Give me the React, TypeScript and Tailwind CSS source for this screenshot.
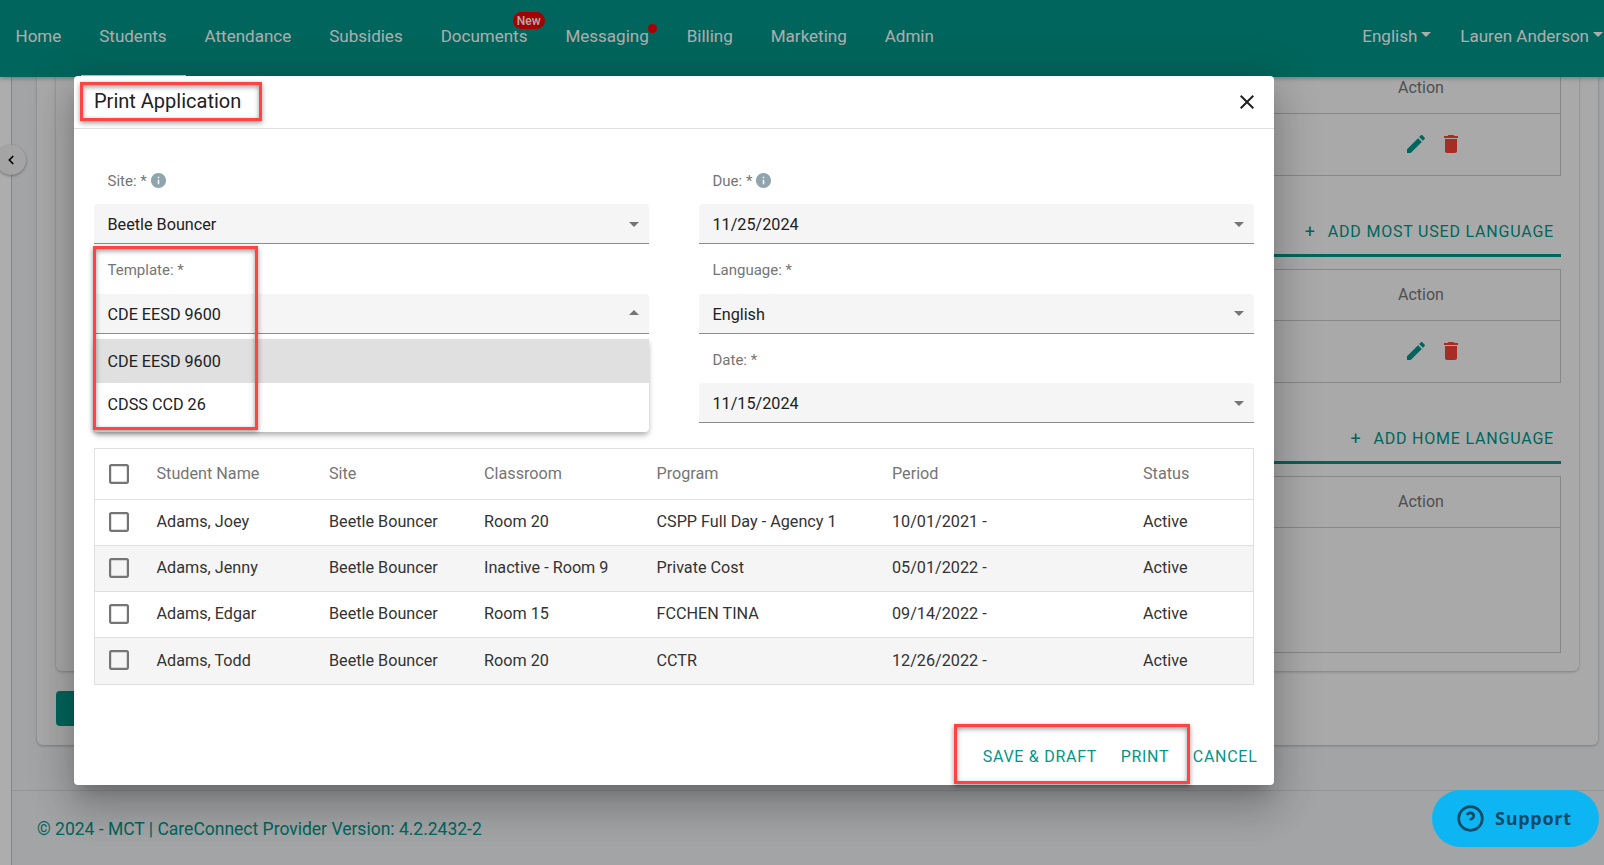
import { ChevronLeft } from "lucide-react";

const navItems = ["Home", "Students", "Attendance", "Subsidies", "Documents", "Messaging", "Billing", "Marketing", "Admin"];

const students = [
  { name: "Adams, Joey", room: "Room 20", program: "CSPP Full Day - Agency 1", period: "10/01/2021 -" },
  { name: "Adams, Jenny", room: "Inactive - Room 9", program: "Private Cost", period: "05/01/2022 -" },
  { name: "Adams, Edgar", room: "Room 15", program: "FCCHEN TINA", period: "09/14/2022 -" },
  { name: "Adams, Todd", room: "Room 20", program: "CCTR", period: "12/26/2022 -" },
];

const tableCols = "grid grid-cols-[61.5px_172.5px_155px_172.5px_235.5px_251px_1fr] items-center";

function Caret() {
  return <span className="ml-[4px] mt-[-3px] h-0 w-0 border-x-[5px] border-t-[5px] border-x-transparent border-t-white" />;
}

function Info() {
  return (
    <svg viewBox="2 2 20 20" className="mb-[1px] ml-[4px] h-[15px] w-[15px] fill-[#90a4ae]">
      <path d="M12 2C6.48 2 2 6.48 2 12s4.48 10 10 10 10-4.48 10-10S17.52 2 12 2zm1 15h-2v-6h2v6zm0-8h-2V7h2v2z" />
    </svg>
  );
}

function Checkbox() {
  return (
    <svg viewBox="3 3 18 18" className="ml-[14px] h-[20px] w-[20px] fill-[#757575]">
      <path d="M19 5v14H5V5h14m0-2H5c-1.1 0-2 .9-2 2v14c0 1.1.9 2 2 2h14c1.1 0 2-.9 2-2V5c0-1.1-.9-2-2-2z" />
    </svg>
  );
}

function Field({ label, value, info, open }: { label: string; value: string; info?: boolean; open?: boolean }) {
  return (
    <div className="relative">
      <div className="flex h-[46px] items-center pl-[13.5px] text-[15px] text-[#757575]">
        {label}
        {info && <Info />}
      </div>
      <div className="flex h-[40px] items-center justify-between rounded-t-[4px] border-b border-[#8c8c8c] bg-[#f5f5f5] pl-[13.5px] pr-[3px] text-[16.2px] text-[#212121]">
        <span className="pt-[4px]">{value}</span>
        <svg viewBox="0 0 24 24" className="h-[24px] w-[24px] fill-[#757575]">
          <path d={open ? "M7 14l5-5 5 5z" : "M7 10l5 5 5-5z"} />
        </svg>
      </div>
      {open && (
        <div className="absolute left-0 right-0 top-[91px] z-10 h-[93px] rounded-b-[4px] bg-white text-[16.2px] text-[#212121] shadow-[0_4px_6px_-1px_rgba(0,0,0,0.25),0_2px_4px_rgba(0,0,0,0.1)]">
          <div className="flex h-[44px] items-center bg-[#e0e0e0] pl-[13.5px] pt-[3px]">CDE EESD 9600</div>
          <div className="flex h-[42px] items-center pl-[13.5px] pt-[3px]">CDSS CCD 26</div>
        </div>
      )}
    </div>
  );
}

function ActionBox({ rows, tall }: { rows?: boolean; tall?: boolean }) {
  return (
    <div className={`ml-[20px] flex flex-col items-end border border-[#c8c8c8] ${tall ? "h-[177px]" : "h-[114px]"}`}>
      <div className="flex h-[51px] w-full shrink-0 justify-end border-b border-[#c8c8c8]">
        <span className="flex w-[278px] items-center justify-center text-[16px] text-[#757575]">Action</span>
      </div>
      {rows && (
        <div className="flex w-[278px] flex-1 items-center justify-center gap-[11px] pb-[2px] pl-[24px]">
          <svg viewBox="0 0 24 24" className="h-[24px] w-[24px] fill-[#009688]">
            <path d="M3 17.25V21h3.75L17.81 9.94l-3.75-3.75L3 17.25zM20.71 7.04c.39-.39.39-1.02 0-1.41l-2.34-2.34c-.39-.39-1.02-.39-1.41 0l-1.83 1.83 3.75 3.75 1.83-1.83z" />
          </svg>
          <svg viewBox="0 0 24 24" className="h-[24px] w-[24px] fill-[#f44336]">
            <path d="M6 19c0 1.1.9 2 2 2h8c1.1 0 2-.9 2-2V7H6v12zM19 4h-3.5l-1-1h-5l-1 1H5v2h14V4z" />
          </svg>
        </div>
      )}
    </div>
  );
}

function AddRow({ label }: { label: string }) {
  return (
    <div className="ml-[20px] mb-[12px] flex h-[81px] items-start justify-end border-b-[3px] border-[#009688] pr-[7px] pt-[43px] text-[16px] leading-[26px] tracking-[0.05em] text-[#009688]">
      <span className="mr-[12px] text-[18px]">+</span>
      {label}
    </div>
  );
}

export default function App() {
  return (
    <div className="relative flex h-[865px] w-full flex-col overflow-hidden bg-[#f0f2f5] font-[Roboto,sans-serif]">
      <nav className="relative z-10 flex h-[77px] shrink-0 items-start justify-between bg-[#009688] pl-[15.5px] pt-[24px] text-[17px] leading-[24px] text-white shadow-[0_2px_4px_rgba(0,0,0,0.25)]">
        <div className="flex gap-[38px]">
          {navItems.map((item) => (
            <span key={item} className="relative">
              {item}
              {item === "Documents" && (
                <span className="absolute left-[72px] top-[-12px] flex h-[17px] w-[32px] items-center justify-center rounded-full bg-[#f70000] text-[12px] font-medium">
                  New
                </span>
              )}
              {item === "Messaging" && (
                <span className="absolute left-[83px] top-[0px] h-[9px] w-[9px] rounded-full bg-[#f70000]" />
              )}
            </span>
          ))}
        </div>
        <div className="flex items-center pr-[1px]">
          <span>English</span>
          <Caret />
          <span className="ml-[29px]">Lauren Anderson</span>
          <Caret />
        </div>
      </nav>

      <div className="flex min-h-0 flex-1">
        <div className="w-[12px] shrink-0 border-r border-[#c4c4c4] bg-white" />
        <div className="flex min-w-0 flex-1 flex-col">
          <main className="h-[713px] shrink-0 pl-[25px] pr-[6px]">
            <div className="h-[668px] overflow-hidden rounded-b-[6px] bg-[#fafafa] px-[19px] shadow-[0_1px_3px_rgba(0,0,0,0.25)]">
              <div className="h-[594px] rounded-b-[6px] bg-[#fafafa] pr-[18px] shadow-[0_1px_3px_rgba(0,0,0,0.25)]">
                {/* first box scrolled partly under the nav */}
                <div className="relative -top-[15px]">
                  <ActionBox rows />
                  <AddRow label="ADD MOST USED LANGUAGE" />
                  <ActionBox rows />
                  <AddRow label="ADD HOME LANGUAGE" />
                  <ActionBox tall />
                </div>
              </div>
              <div className="mt-[20px] h-[35px] w-[120px] rounded-[4px] bg-[#009688]" />
            </div>
          </main>
          <footer className="flex h-[75px] shrink-0 items-start border-t border-[#dcdcdc] pl-[25px] pt-[26px] text-[17.5px] leading-[24px] text-[#009688]">
            © 2024 - MCT | CareConnect Provider Version: 4.2.2432-2
          </footer>
        </div>
      </div>

      <button className="absolute left-[-4px] top-[145px] flex h-[30px] w-[30px] items-center justify-center rounded-full bg-[#f2f2f2] shadow-[0_1px_3px_rgba(0,0,0,0.35)]">
        <ChevronLeft size={14} strokeWidth={3} color="#000" />
      </button>

      {/* backdrop and dialog */}
      <div className="absolute inset-0 z-20 bg-black/[0.32]" />
      <div className="absolute left-[74px] top-[76px] z-30 flex h-[709px] w-[1200px] flex-col rounded-[4px] bg-white shadow-[0_11px_15px_-7px_rgba(0,0,0,0.2),0_24px_38px_3px_rgba(0,0,0,0.14),0_9px_46px_8px_rgba(0,0,0,0.12)]">
        <div className="absolute left-[7px] top-[-1px] h-[1px] w-[105px] bg-[#b8b8b8]" />
        <header className="flex h-[53px] shrink-0 items-center justify-between border-b border-[#e0e0e0] pl-[20px] pr-[15px]">
          <h2 className="pb-[2px] text-[20px] text-[#212121]">Print Application</h2>
          <svg viewBox="0 0 24 24" className="h-[24px] w-[24px] fill-[#212121]">
            <path d="M19 6.41L17.59 5 12 10.59 6.41 5 5 6.41 10.59 12 5 17.59 6.41 19 12 13.41 17.59 19 19 17.59 13.41 12z" />
          </svg>
        </header>

        <div className="px-[20px] pt-[29px]">
          <div className="grid grid-cols-2 gap-x-[50px] gap-y-[3.5px]">
            <Field label="Site: *" value="Beetle Bouncer" info />
            <Field label="Due: *" value="11/25/2024" info />
            <Field label="Template: *" value="CDE EESD 9600" open />
            <Field label="Language: *" value="English" />
            <div />
            <Field label="Date: *" value="11/15/2024" />
          </div>

          <div className="mt-[25px] border border-[#e0e0e0] text-[16.2px] text-[#333]">
            <div className={`${tableCols} h-[50px] text-[#757575]`}>
              <Checkbox />
              <span>Student Name</span>
              <span>Site</span>
              <span>Classroom</span>
              <span>Program</span>
              <span>Period</span>
              <span>Status</span>
            </div>
            {students.map((s, i) => (
              <div
                key={s.name}
                className={`${tableCols} border-t border-[#e0e0e0] pb-[2px] [&>span]:pt-[2px] ${i === 3 ? "h-[47px]" : "h-[46px]"} ${i % 2 ? "bg-[#f5f5f5]" : "bg-white"}`}
              >
                <Checkbox />
                <span>{s.name}</span>
                <span>Beetle Bouncer</span>
                <span>{s.room}</span>
                <span>{s.program}</span>
                <span>{s.period}</span>
                <span>Active</span>
              </div>
            ))}
          </div>
        </div>

        <div className="mt-auto flex h-[58px] shrink-0 items-center justify-end gap-[23.5px] pr-[16.5px] pt-[2px] text-[16px] tracking-[0.045em] text-[#009688]">
          <span>SAVE &amp; DRAFT</span>
          <span>PRINT</span>
          <span>CANCEL</span>
        </div>

        {/* annotation boxes drawn on the screenshot */}
        <div className="pointer-events-none absolute left-[6px] top-[6px] h-[39px] w-[182px] border-[3px] border-[#ff4444] shadow-[0_2px_5px_rgba(0,0,0,0.4),inset_0_2px_5px_rgba(0,0,0,0.4)]" />
        <div className="pointer-events-none absolute left-[19px] top-[170px] z-20 h-[184px] w-[165px] border-[3px] border-[#ff4444] shadow-[0_2px_5px_rgba(0,0,0,0.4),inset_0_2px_5px_rgba(0,0,0,0.4)]" />
        <div className="pointer-events-none absolute left-[880px] top-[648px] h-[60px] w-[236px] border-[3px] border-[#ff4444] shadow-[0_2px_5px_rgba(0,0,0,0.4),inset_0_2px_5px_rgba(0,0,0,0.4)]" />
      </div>

      <div className="absolute left-[1432px] top-[790px] z-30 flex h-[57px] w-[167px] items-center rounded-full bg-[#0db6f3] pl-[25px] font-['Open_Sans',sans-serif] text-[18px] font-bold tracking-[0.04em] text-[#0f4a66]">
        <svg viewBox="0 0 24 24" className="h-[27px] w-[27px] fill-none stroke-[#0f4a66] stroke-[2.4]">
          <circle cx="12" cy="12" r="10.5" />
          <path d="M9.09 9a3 3 0 0 1 5.83 1c0 2-3 2.5-3 3.5" />
          <path d="M12 17.5h.01" />
        </svg>
        <span className="ml-[11px]">Support</span>
      </div>
    </div>
  );
}
